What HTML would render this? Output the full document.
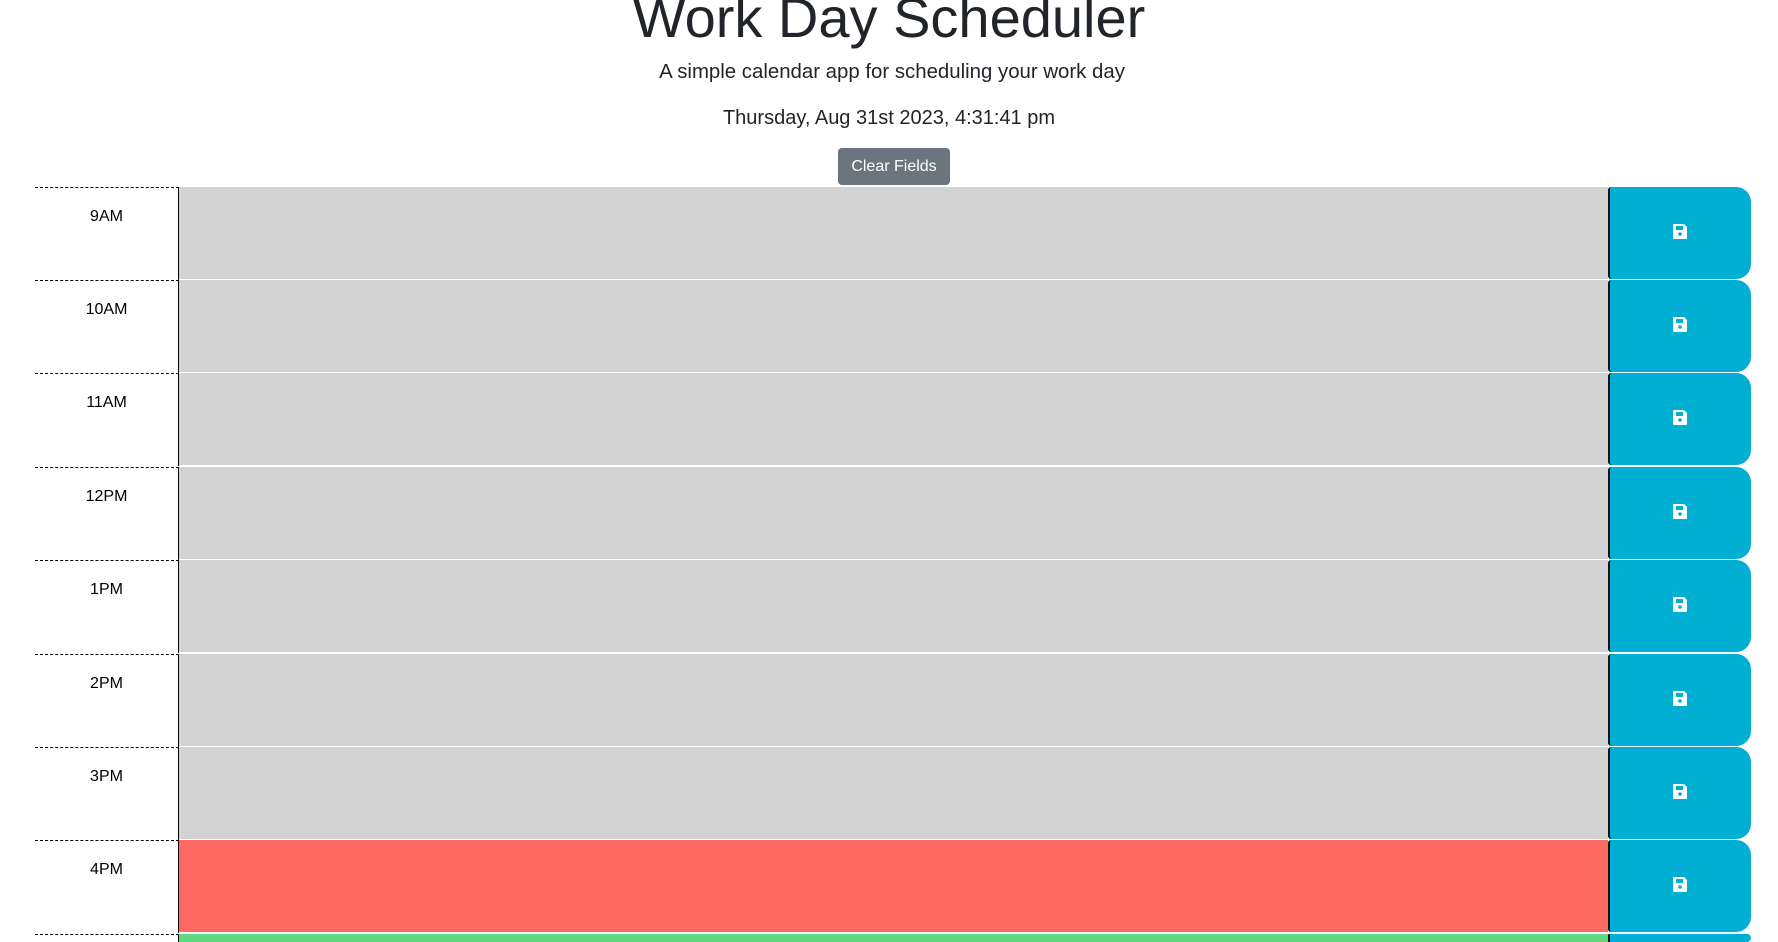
<!DOCTYPE html>
<html><head><meta charset="utf-8"><style>
*{margin:0;padding:0;box-sizing:border-box}
html,body{width:1778px;height:942px;overflow:hidden}
body{background:#fff;font-family:"Liberation Sans",sans-serif;color:#212529;position:relative}
.t{position:absolute;left:0;width:1778px;text-align:center;white-space:nowrap}
h1{font-weight:300;font-size:56px;line-height:56px;top:-10px;color:#212529}
.sub{font-size:20.4px;line-height:20px;top:62px;left:3px}
.date{font-size:20px;line-height:20px;top:108px}
.btn{position:absolute;left:838px;top:148px;width:112px;height:37px;background:#6c757d;border-radius:4px;color:#fff;font-size:16px;line-height:37px;text-align:center}
.row{position:absolute;left:35px;width:1716px;height:93px}
.hour{position:absolute;left:0;top:0;width:144px;height:93px;border-top:1px dashed #000;border-right:1px solid #000;text-align:center;font-size:16px;padding-top:20px;color:#000}
.ta{position:absolute;left:144px;top:0;width:1429px;height:92px;background:#d3d3d3}
.sv{position:absolute;left:1573px;top:0;width:143px;height:92px;background:#00afd1;border-left:2px solid #111;border-radius:3px 15px 15px 3px}
.sv svg{position:absolute;left:63px;top:37px}
.last,.last .hour,.last .ta,.last .sv{height:8px}
.last .hour{padding:0}
</style></head><body>
<h1 class="t">Work Day Scheduler</h1>
<div class="t sub">A simple calendar app for scheduling your work day</div>
<div class="t date">Thursday, Aug 31st 2023, 4:31:41 pm</div>
<div class="btn">Clear Fields</div>

<div class="row" style="top:187px"><div class="hour">9AM</div><div class="ta"></div><div class="sv"><svg width="14" height="15" viewBox="0 0 14 15"><path d="M1 0h10l3 3v11a1 1 0 0 1-1 1H1a1 1 0 0 1-1-1V1a1 1 0 0 1 1-1z" fill="#fff"/><rect x="3" y="2" width="7" height="4" fill="#00afd1"/><circle cx="7" cy="10" r="1.8" fill="#00afd1"/></svg></div></div>
<div class="row" style="top:280px"><div class="hour">10AM</div><div class="ta"></div><div class="sv"><svg width="14" height="15" viewBox="0 0 14 15"><path d="M1 0h10l3 3v11a1 1 0 0 1-1 1H1a1 1 0 0 1-1-1V1a1 1 0 0 1 1-1z" fill="#fff"/><rect x="3" y="2" width="7" height="4" fill="#00afd1"/><circle cx="7" cy="10" r="1.8" fill="#00afd1"/></svg></div></div>
<div class="row" style="top:373px"><div class="hour">11AM</div><div class="ta"></div><div class="sv"><svg width="14" height="15" viewBox="0 0 14 15"><path d="M1 0h10l3 3v11a1 1 0 0 1-1 1H1a1 1 0 0 1-1-1V1a1 1 0 0 1 1-1z" fill="#fff"/><rect x="3" y="2" width="7" height="4" fill="#00afd1"/><circle cx="7" cy="10" r="1.8" fill="#00afd1"/></svg></div></div>
<div class="row" style="top:467px"><div class="hour">12PM</div><div class="ta"></div><div class="sv"><svg width="14" height="15" viewBox="0 0 14 15"><path d="M1 0h10l3 3v11a1 1 0 0 1-1 1H1a1 1 0 0 1-1-1V1a1 1 0 0 1 1-1z" fill="#fff"/><rect x="3" y="2" width="7" height="4" fill="#00afd1"/><circle cx="7" cy="10" r="1.8" fill="#00afd1"/></svg></div></div>
<div class="row" style="top:560px"><div class="hour">1PM</div><div class="ta"></div><div class="sv"><svg width="14" height="15" viewBox="0 0 14 15"><path d="M1 0h10l3 3v11a1 1 0 0 1-1 1H1a1 1 0 0 1-1-1V1a1 1 0 0 1 1-1z" fill="#fff"/><rect x="3" y="2" width="7" height="4" fill="#00afd1"/><circle cx="7" cy="10" r="1.8" fill="#00afd1"/></svg></div></div>
<div class="row" style="top:654px"><div class="hour">2PM</div><div class="ta"></div><div class="sv"><svg width="14" height="15" viewBox="0 0 14 15"><path d="M1 0h10l3 3v11a1 1 0 0 1-1 1H1a1 1 0 0 1-1-1V1a1 1 0 0 1 1-1z" fill="#fff"/><rect x="3" y="2" width="7" height="4" fill="#00afd1"/><circle cx="7" cy="10" r="1.8" fill="#00afd1"/></svg></div></div>
<div class="row" style="top:747px"><div class="hour">3PM</div><div class="ta"></div><div class="sv"><svg width="14" height="15" viewBox="0 0 14 15"><path d="M1 0h10l3 3v11a1 1 0 0 1-1 1H1a1 1 0 0 1-1-1V1a1 1 0 0 1 1-1z" fill="#fff"/><rect x="3" y="2" width="7" height="4" fill="#00afd1"/><circle cx="7" cy="10" r="1.8" fill="#00afd1"/></svg></div></div>
<div class="row" style="top:840px"><div class="hour">4PM</div><div class="ta" style="background:#ff6961"></div><div class="sv"><svg width="14" height="15" viewBox="0 0 14 15"><path d="M1 0h10l3 3v11a1 1 0 0 1-1 1H1a1 1 0 0 1-1-1V1a1 1 0 0 1 1-1z" fill="#fff"/><rect x="3" y="2" width="7" height="4" fill="#00afd1"/><circle cx="7" cy="10" r="1.8" fill="#00afd1"/></svg></div></div>
<div class="row last" style="top:934px"><div class="hour"></div><div class="ta" style="background:#60d982"></div><div class="sv"></div></div>
</body></html>
